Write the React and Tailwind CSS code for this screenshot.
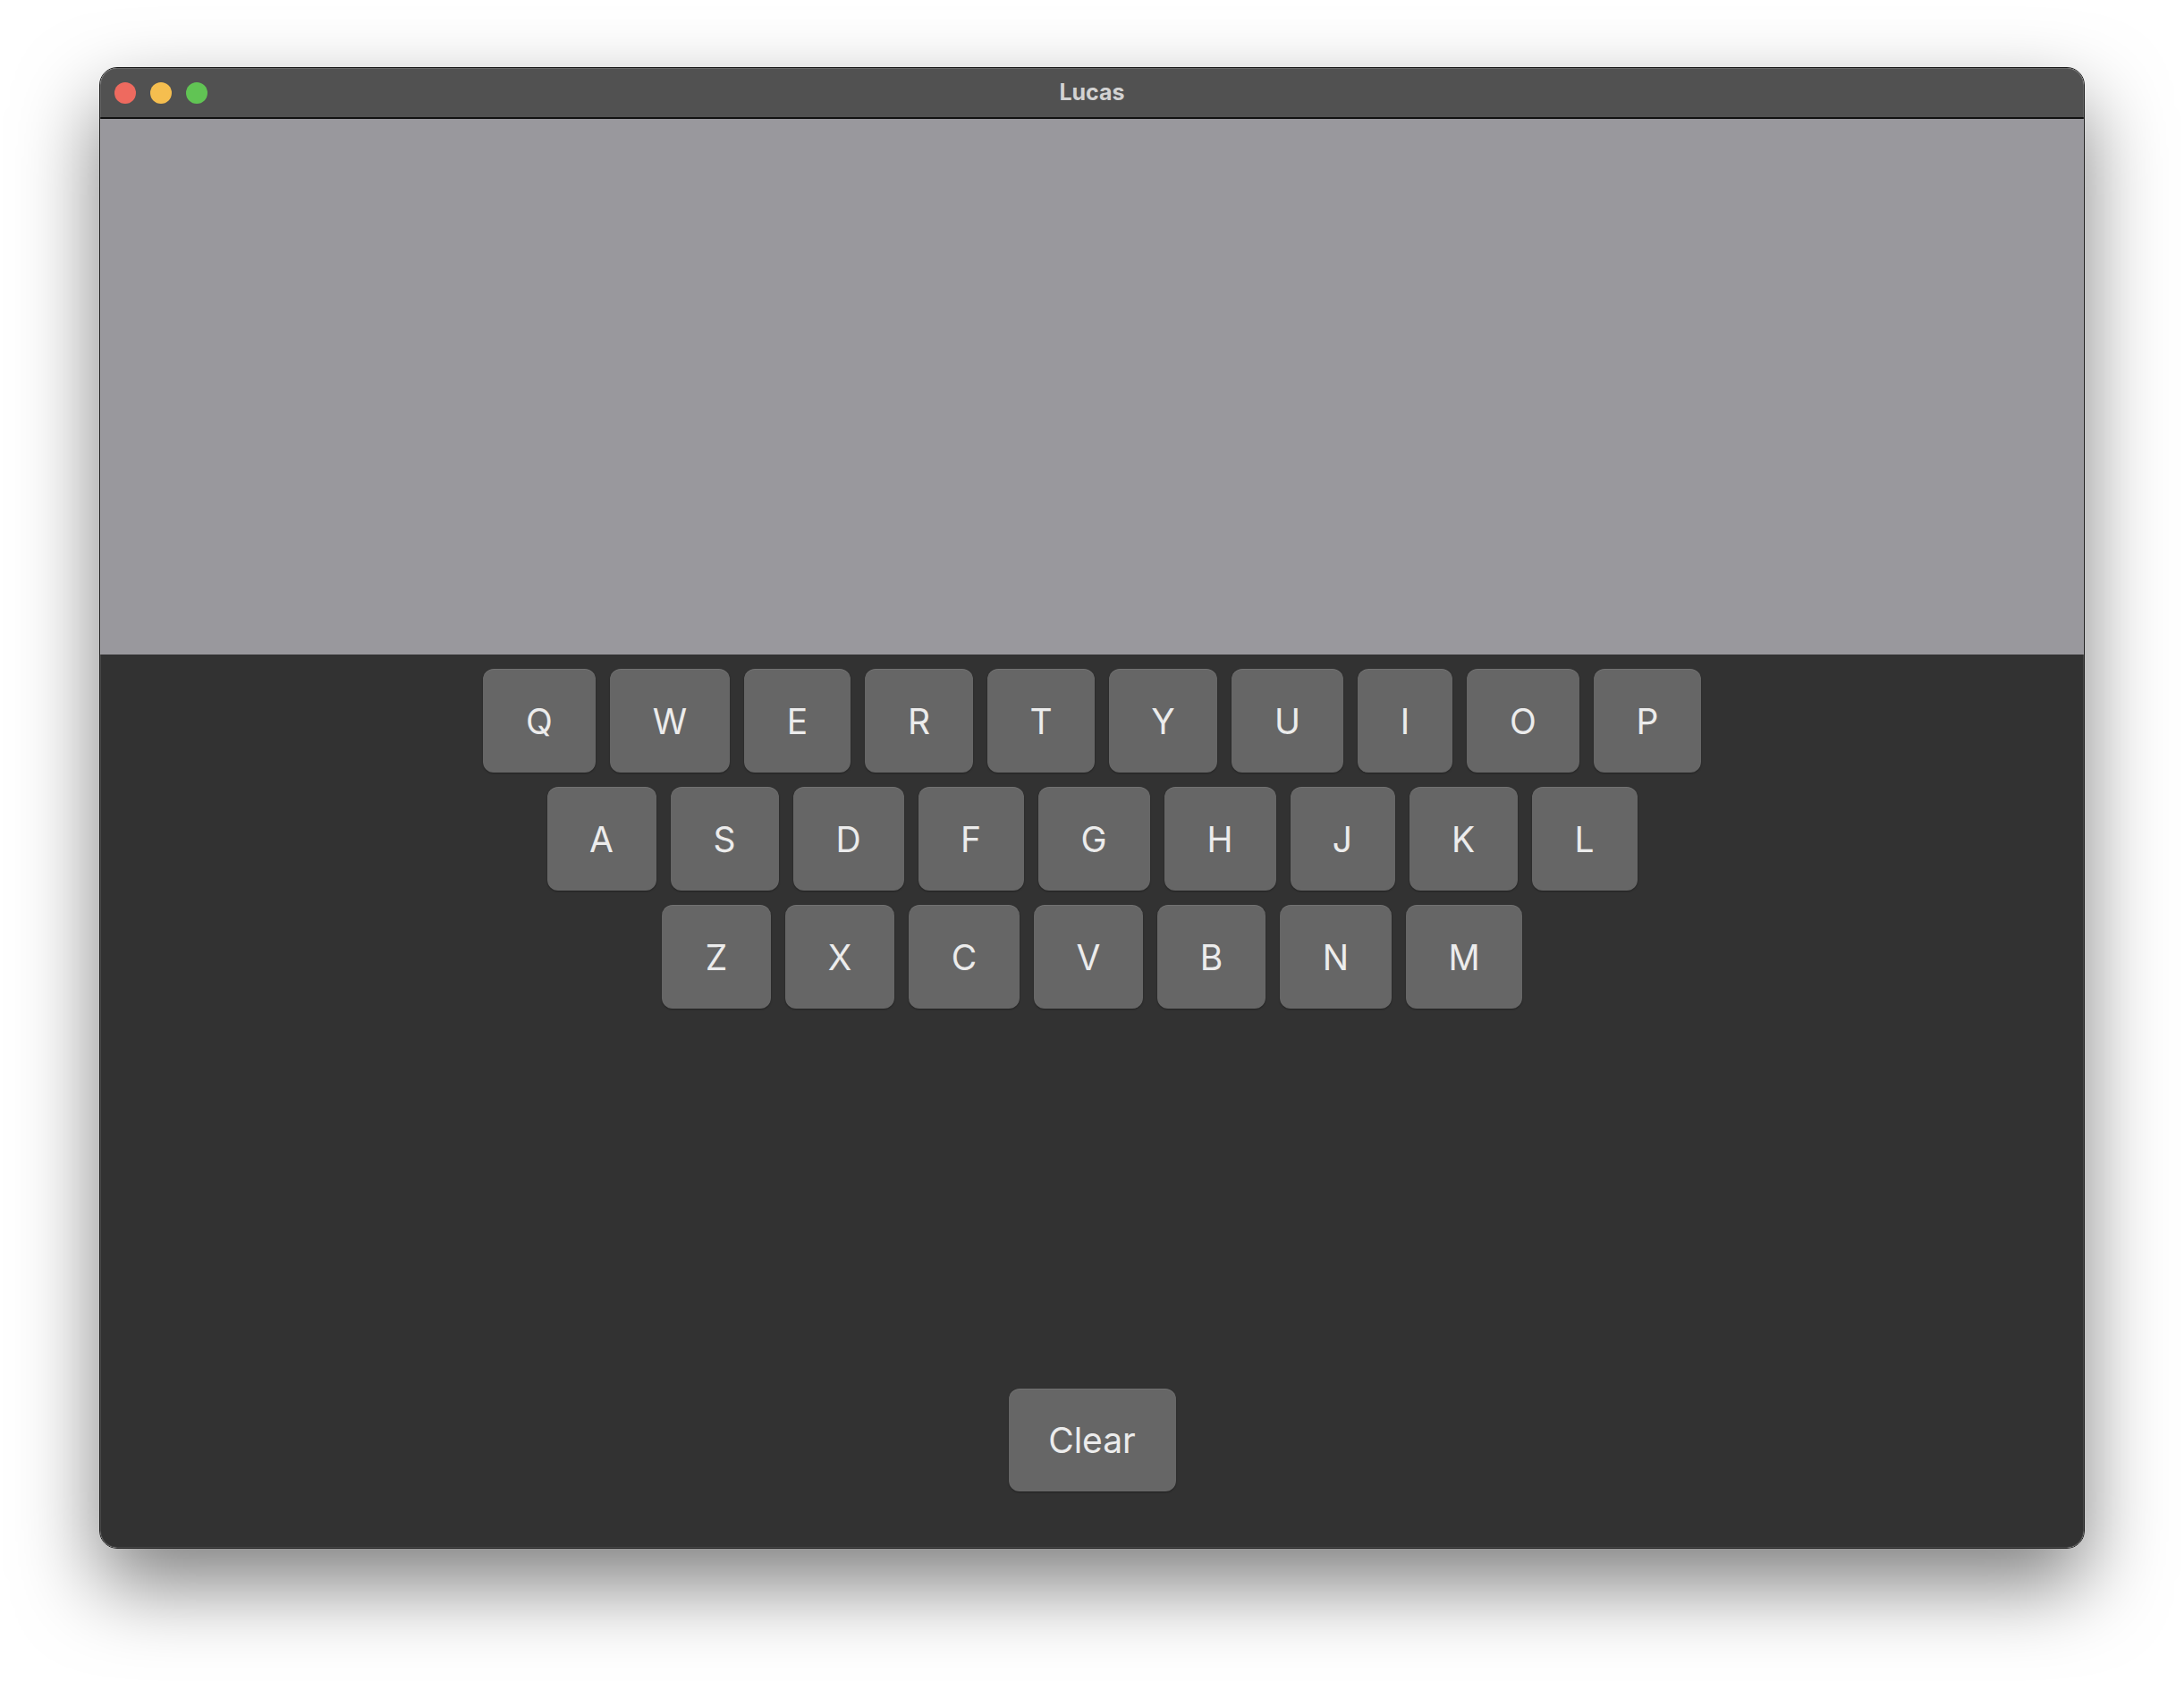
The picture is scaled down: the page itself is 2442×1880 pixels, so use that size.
import React, { useState } from "react";

const rows = [
  [["Q", 126], ["W", 134], ["E", 119], ["R", 121], ["T", 120], ["Y", 121], ["U", 125], ["I", 106], ["O", 126], ["P", 120]],
  [["A", 122], ["S", 121], ["D", 124], ["F", 118], ["G", 125], ["H", 125], ["J", 117], ["K", 121], ["L", 118]],
  [["Z", 122], ["X", 122], ["C", 124], ["V", 122], ["B", 121], ["N", 125], ["M", 130]],
];

function Key({ label, width, onPress }) {
  return (
    <button
      onClick={() => onPress(label)}
      style={{ width }}
      className="h-[116px] rounded-[12px] bg-[#666666] text-[39px] text-[#ececec] leading-none flex items-center justify-center shadow-[0_1px_2px_rgba(0,0,0,0.35),inset_0_1px_0_rgba(255,255,255,0.08)]"
    >
      {label}
    </button>
  );
}

export default function App() {
  const [text, setText] = useState("");

  return (
    <div
      className="w-[2442px] h-[1880px] bg-white pt-[75px]"
      style={{ fontFamily: "Inter, 'Liberation Sans', sans-serif" }}
    >
      <div className="relative mx-auto w-[2220px] h-[1657px] rounded-[20px] overflow-hidden border border-[#1a1a1a] flex flex-col shadow-[0_40px_90px_rgba(0,0,0,0.5)]">
        {/* Title bar */}
        <div className="relative h-[57px] shrink-0 bg-[#515151] border-b-2 border-[#111111] flex items-center pl-[16px]">
          <div className="flex gap-[16px]">
            <span className="w-[24px] h-[24px] rounded-full bg-[#ee6a5f]" />
            <span className="w-[24px] h-[24px] rounded-full bg-[#f5be4f]" />
            <span className="w-[24px] h-[24px] rounded-full bg-[#61c454]" />
          </div>
          <div className="absolute inset-0 flex items-center justify-center text-[25px] font-bold text-[#d2d2d2] pointer-events-none">
            Lucas
          </div>
        </div>

        {/* Output area */}
        <div className="h-[599px] shrink-0 bg-[#99989d] px-6 py-4 text-[38px] text-[#222]">
          {text}
        </div>

        {/* Keyboard */}
        <div className="flex-1 bg-[#323232] flex flex-col items-center pt-[16px] pb-[63px]">
          <div className="flex flex-col items-center gap-[16px]">
            {rows.map((row, i) => (
              <div key={i} className="flex gap-[16px]">
                {row.map(([label, w]) => (
                  <Key key={label} label={label} width={w} onPress={(l) => setText((t) => t + l)} />
                ))}
              </div>
            ))}
          </div>
          <div className="flex-1" />
          <button
            onClick={() => setText("")}
            className="w-[187px] h-[115px] rounded-[12px] bg-[#666666] text-[39px] text-[#ececec] leading-none flex items-center justify-center shadow-[0_1px_2px_rgba(0,0,0,0.35),inset_0_1px_0_rgba(255,255,255,0.08)]"
          >
            Clear
          </button>
        </div>

        {/* inner window highlight */}
        <div className="absolute inset-0 rounded-[19px] pointer-events-none shadow-[inset_0_0_0_1px_rgba(255,255,255,0.12)]" />
      </div>
    </div>
  );
}
